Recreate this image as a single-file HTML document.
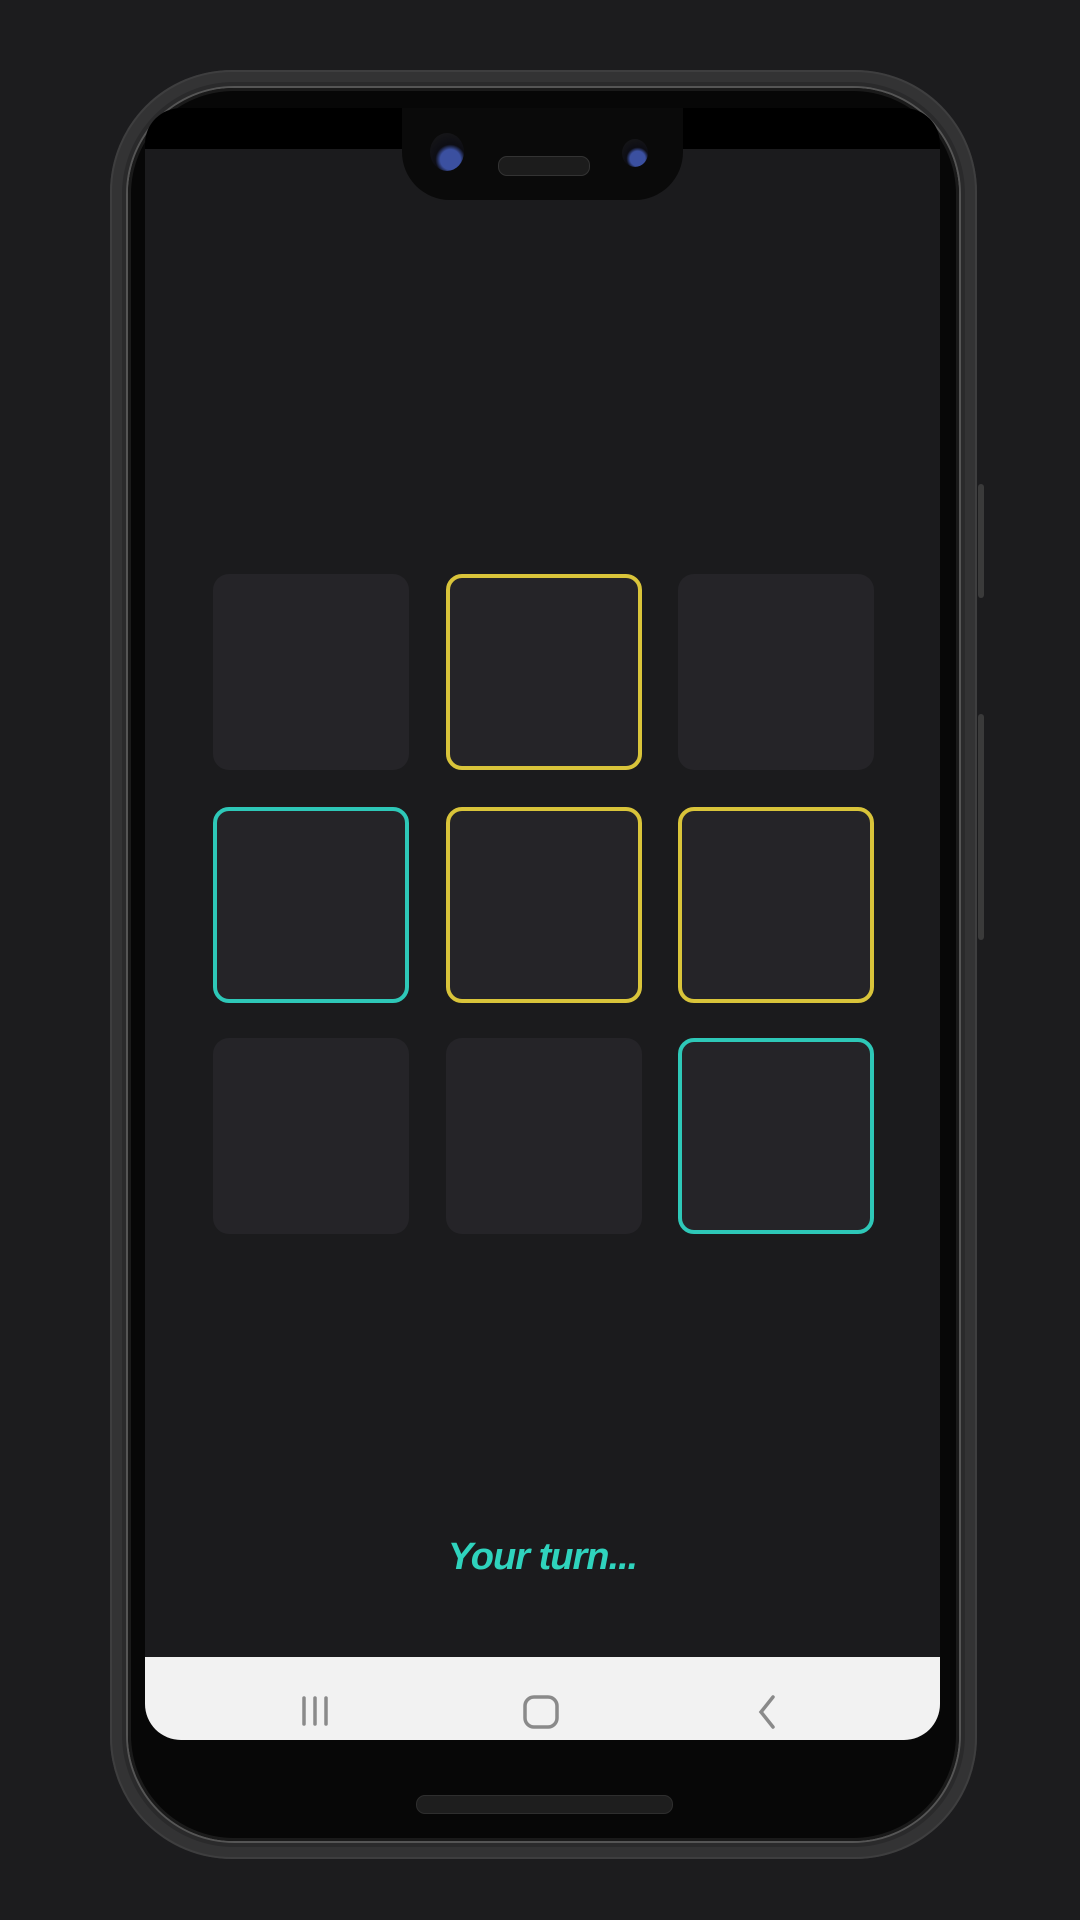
<!DOCTYPE html>
<html><head><meta charset="utf-8"><style>
html,body{margin:0;padding:0;background:#1c1c1e;}
body{width:1080px;height:1920px;position:relative;overflow:hidden;font-family:"Liberation Sans",sans-serif;}
.abs{position:absolute;}
.shell{left:110px;top:70px;width:867px;height:1789px;border-radius:122px;background:#333334;box-shadow:inset 0 0 0 2px #3e3e3f;}
.shell2{left:122px;top:82px;width:843px;height:1765px;border-radius:112px;background:#2a2a2b;}
.bezel{left:128px;top:88px;width:831px;height:1753px;border-radius:106px;background:#070707;box-shadow:inset 0 0 0 3px #1a1a1a,0 0 0 2px #555;}
.screen{left:145px;top:108px;width:795px;height:1632px;border-radius:36px;background:#1b1b1d;overflow:hidden;}
.status{left:0;top:0;width:795px;height:41px;background:#000;}
.notch{left:257px;top:0;width:281px;height:92px;background:#0a0a0a;border-radius:0 0 48px 48px;}
.cell{position:absolute;width:196px;height:196px;border-radius:16px;background:#252428;box-sizing:border-box;}
.y{border:4px solid #d9c43a;}
.t{border:4px solid #2ec8b8;}
.nav{left:0;top:1549px;width:795px;height:83px;background:#f2f2f2;}
.btn{background:#3a3a3a;border-radius:3px;width:6px;}
</style></head><body>
<div class="abs btn" style="left:978px;top:484px;height:114px;"></div>
<div class="abs btn" style="left:978px;top:714px;height:226px;"></div>
<div class="abs shell"></div>
<div class="abs shell2"></div>
<div class="abs bezel"></div>
<div class="abs screen">
  <div class="abs status"></div>
  <div class="abs notch">
    <div class="abs" style="left:28px;top:25px;width:34px;height:38px;border-radius:50%;background:radial-gradient(circle at 60% 70%,#3b50a0 0 30%,#0d0d14 45%,#1a1a1a 100%);"></div>
    <div class="abs" style="left:220px;top:31px;width:26px;height:28px;border-radius:50%;background:radial-gradient(circle at 60% 70%,#3b50a0 0 30%,#0d0d14 45%,#1a1a1a 100%);"></div>
    <div class="abs" style="left:96px;top:48px;width:90px;height:18px;border-radius:9px;background:#1c1c1c;border:1px solid #333;"></div>
  </div>
  <div class="cell" style="left:68px;top:466px;"></div>
  <div class="cell y" style="left:301px;top:466px;"></div>
  <div class="cell" style="left:533px;top:466px;"></div>
  <div class="cell t" style="left:68px;top:699px;"></div>
  <div class="cell y" style="left:301px;top:699px;"></div>
  <div class="cell y" style="left:533px;top:699px;"></div>
  <div class="cell" style="left:68px;top:930px;"></div>
  <div class="cell" style="left:301px;top:930px;"></div>
  <div class="cell t" style="left:533px;top:930px;"></div>
  <div class="abs" style="left:0;top:1428px;width:795px;text-align:center;color:#2fd3bd;font-size:38px;font-weight:bold;font-style:italic;letter-spacing:-1px;">Your turn...</div>
  <div class="abs nav">
    <svg class="abs" style="left:0;top:0" width="795" height="83">
      <g stroke="#8a8a8a" stroke-width="3.5" fill="none" stroke-linecap="round">
        <line x1="159" y1="41" x2="159" y2="67"/><line x1="170" y1="41" x2="170" y2="67"/><line x1="181" y1="41" x2="181" y2="67"/>
        <rect x="380" y="40" width="32" height="30" rx="9"/>
        <polyline points="628,40 616,55 628,70"/>
      </g>
    </svg>
  </div>
</div>
<div class="abs" style="left:416px;top:1795px;width:255px;height:17px;border-radius:9px;background:#1e1e1e;border:1px solid #2e2e2e;"></div>
</body></html>
